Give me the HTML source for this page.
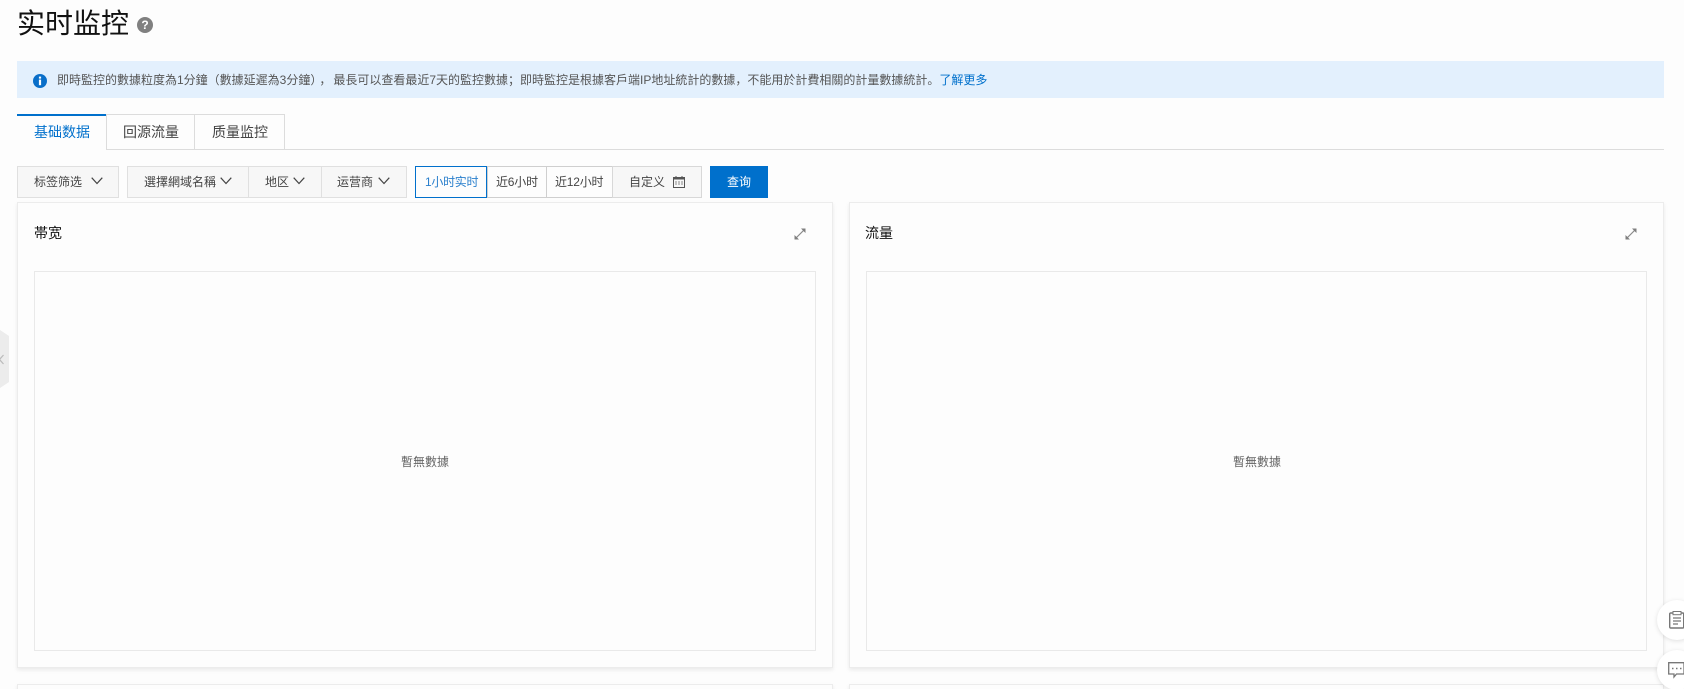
<!DOCTYPE html>
<html lang="zh"><head><meta charset="utf-8"><title>实时监控</title>
<style>
html,body{margin:0;padding:0;width:1684px;height:689px;overflow:hidden;background:#fdfdfd}
body{position:relative;font-family:"Liberation Sans","Noto Sans CJK SC",sans-serif;font-size:12px;color:#333}
.a{position:absolute;box-sizing:border-box;white-space:nowrap}
.btn{background:#f7f7f7;border:1px solid #e0e0e0;height:32px;top:166px}
.t{line-height:32px;top:166px;color:#444}
.tab{top:114px;height:36px;border:1px solid #dcdcdc;border-left:0;background:#fdfdfd}
.tt{top:114px;line-height:36px;font-size:14px;color:#444}
.card{background:#fdfdfd;border:1px solid #ececec;box-shadow:0 2px 4px rgba(0,0,0,.08)}
.inner{border:1px solid #e9e9e9;background:#fdfdfd}
.ct{font-size:14px;color:#111;line-height:20px}
.nd{font-size:12px;color:#666;line-height:16px;width:60px;text-align:center}
svg{position:absolute;overflow:visible}
</style></head><body>

<div class="a" style="left:17px;top:4px;font-size:28px;line-height:40px;color:#111">实时监控</div>
<svg style="left:137px;top:17px" width="16" height="16" viewBox="0 0 16 16"><circle cx="8" cy="8" r="8" fill="#808080"/><text x="8" y="12.2" text-anchor="middle" font-size="12" font-weight="bold" fill="#fff" font-family="Liberation Sans,sans-serif">?</text></svg>

<div class="a" style="left:17px;top:61px;width:1647px;height:37px;background:#e3f0fd"></div>
<svg style="left:33px;top:74px" width="14" height="14" viewBox="0 0 14 14"><circle cx="7" cy="7" r="7" fill="#0a6fc9"/><rect x="5.9" y="2.6" width="2.2" height="2" fill="#fff"/><rect x="5.9" y="5.6" width="2.2" height="5.6" fill="#fff"/></svg>
<div class="a" style="left:57px;top:62px;line-height:37px;font-size:12px;color:#555">即時監控的數據粒度為1分鐘（數據延遲為3分鐘）<span style="margin:0 2px 0 3px">，</span>最長可以查看最近7天的監控數據；即時監控是根據客戶端IP地址統計的數據，不能用於計費相關的計量數據統計。<span style="color:#0070cc">了解更多</span></div>

<div class="a" style="left:17px;top:149px;width:1647px;height:1px;background:#dcdcdc"></div>
<div class="a" style="left:17px;top:114px;width:89px;height:36px;background:#fdfdfd;border-top:2px solid #0070cc"></div>
<div class="a tab" style="left:106px;width:89px;border-left:1px solid #dcdcdc"></div>
<div class="a tab" style="left:195px;width:90px"></div>
<div class="a tt" style="left:34px;color:#0070cc">基础数据</div>
<div class="a tt" style="left:123px">回源流量</div>
<div class="a tt" style="left:212px">质量监控</div>

<div class="a btn" style="left:17px;width:102px"></div>
<div class="a btn" style="left:127px;width:122px"></div>
<div class="a btn" style="left:248px;width:74px"></div>
<div class="a btn" style="left:321px;width:86px"></div>
<div class="a t" style="left:34px">标签筛选</div>
<div class="a t" style="left:144px">選擇網域名稱</div>
<div class="a t" style="left:265px">地区</div>
<div class="a t" style="left:337px">运营商</div>
<svg style="left:91px;top:177px" width="12" height="8"><path d="M.7.7 6 6.5 11.3.7" fill="none" stroke="#444" stroke-width="1.2"/></svg>
<svg style="left:220px;top:177px" width="12" height="8"><path d="M.7.7 6 6.5 11.3.7" fill="none" stroke="#444" stroke-width="1.2"/></svg>
<svg style="left:293px;top:177px" width="12" height="8"><path d="M.7.7 6 6.5 11.3.7" fill="none" stroke="#444" stroke-width="1.2"/></svg>
<svg style="left:378px;top:177px" width="12" height="8"><path d="M.7.7 6 6.5 11.3.7" fill="none" stroke="#444" stroke-width="1.2"/></svg>

<div class="a btn" style="left:487px;width:60px;background:#fdfdfd;border-color:#cfcfcf"></div>
<div class="a btn" style="left:546px;width:67px;background:#fdfdfd;border-color:#cfcfcf"></div>
<div class="a btn" style="left:612px;width:90px;border-color:#d8d8d8"></div>
<div class="a btn" style="left:415px;width:72px;background:#fdfdfd;border-color:#0070cc"></div>
<div class="a t" style="left:425px;color:#2a7fcc;letter-spacing:-.3px">1小时实时</div>
<div class="a t" style="left:496px;letter-spacing:-.2px">近6小时</div>
<div class="a t" style="left:555px;letter-spacing:-.2px">近12小时</div>
<div class="a t" style="left:629px">自定义</div>
<svg style="left:673px;top:176px" width="12" height="12" viewBox="0 0 12 12"><rect x=".5" y="1.5" width="11" height="10" fill="none" stroke="#555"/><rect x="0" y="1" width="12" height="2.500" fill="#555"/><rect x="2.5" y="0" width="1" height="2" fill="#555"/><rect x="8.5" y="0" width="1" height="2" fill="#555"/><path d="M2 6h2M5 6h2M8 6h2M2 8h2M5 8h2M8 8h2" stroke="#888"/></svg>
<div class="a" style="left:710px;top:166px;width:58px;height:32px;background:#0070cc;color:#fff;line-height:32px;text-align:center">查询</div>

<div class="a card" style="left:17px;top:202px;width:816px;height:466px"></div>
<div class="a card" style="left:849px;top:202px;width:815px;height:466px"></div>
<div class="a inner" style="left:34px;top:271px;width:782px;height:380px"></div>
<div class="a inner" style="left:866px;top:271px;width:781px;height:380px"></div>
<div class="a ct" style="left:34px;top:223px">帯宽</div>
<div class="a ct" style="left:865px;top:223px">流量</div>
<svg style="left:794px;top:228px" width="12" height="12" viewBox="0 0 12 12"><path d="M1.500 10.500 10.500 1.500" stroke="#8a8a8a" stroke-width="1.2"/><path d="M7 .5h4.500V5zM.5 7v4.500H5z" fill="#7f7f7f"/></svg>
<svg style="left:1625px;top:228px" width="12" height="12" viewBox="0 0 12 12"><path d="M1.500 10.500 10.500 1.500" stroke="#8a8a8a" stroke-width="1.2"/><path d="M7 .5h4.500V5zM.5 7v4.500H5z" fill="#7f7f7f"/></svg>
<div class="a nd" style="left:395px;top:454px">暫無數據</div>
<div class="a nd" style="left:1227px;top:454px">暫無數據</div>

<div class="a card" style="left:17px;top:684px;width:816px;height:20px"></div>
<div class="a card" style="left:849px;top:684px;width:815px;height:20px"></div>

<svg style="left:0;top:330px" width="9" height="58" viewBox="0 0 9 58"><path d="M0 0 9 6V52L0 58z" fill="#ececec"/><path d="M3.500 25-.5 29.500l4 4.500" fill="none" stroke="#bbb" stroke-width="1.2"/></svg>

<div class="a" style="left:1657px;top:600px;width:40px;height:40px;border-radius:50%;background:#fff;box-shadow:0 1px 5px rgba(0,0,0,.12)"></div>
<div class="a" style="left:1657px;top:650px;width:40px;height:40px;border-radius:50%;background:#fff;box-shadow:0 1px 5px rgba(0,0,0,.12)"></div>
<svg style="left:1669px;top:611px" width="15" height="18" viewBox="0 0 15 18"><rect x=".7" y="2" width="14" height="15" rx="1" fill="none" stroke="#777" stroke-width="1.400"/><rect x="4" y="0.500" width="8" height="3.200" fill="#fff" stroke="#777"/><path d="M4 7h8M4 10h8M4 13h5" stroke="#777" stroke-width="1.200"/></svg>
<svg style="left:1668px;top:662px" width="16" height="17" viewBox="0 0 16 17"><path d="M.7.7H16V12H8.500L6 15V12H.7z" fill="none" stroke="#777" stroke-width="1.300"/><path d="M4 6.500h1.500M8 6.500h1.500M12 6.500h1.500" stroke="#777" stroke-width="1.500"/></svg>
</body></html>
